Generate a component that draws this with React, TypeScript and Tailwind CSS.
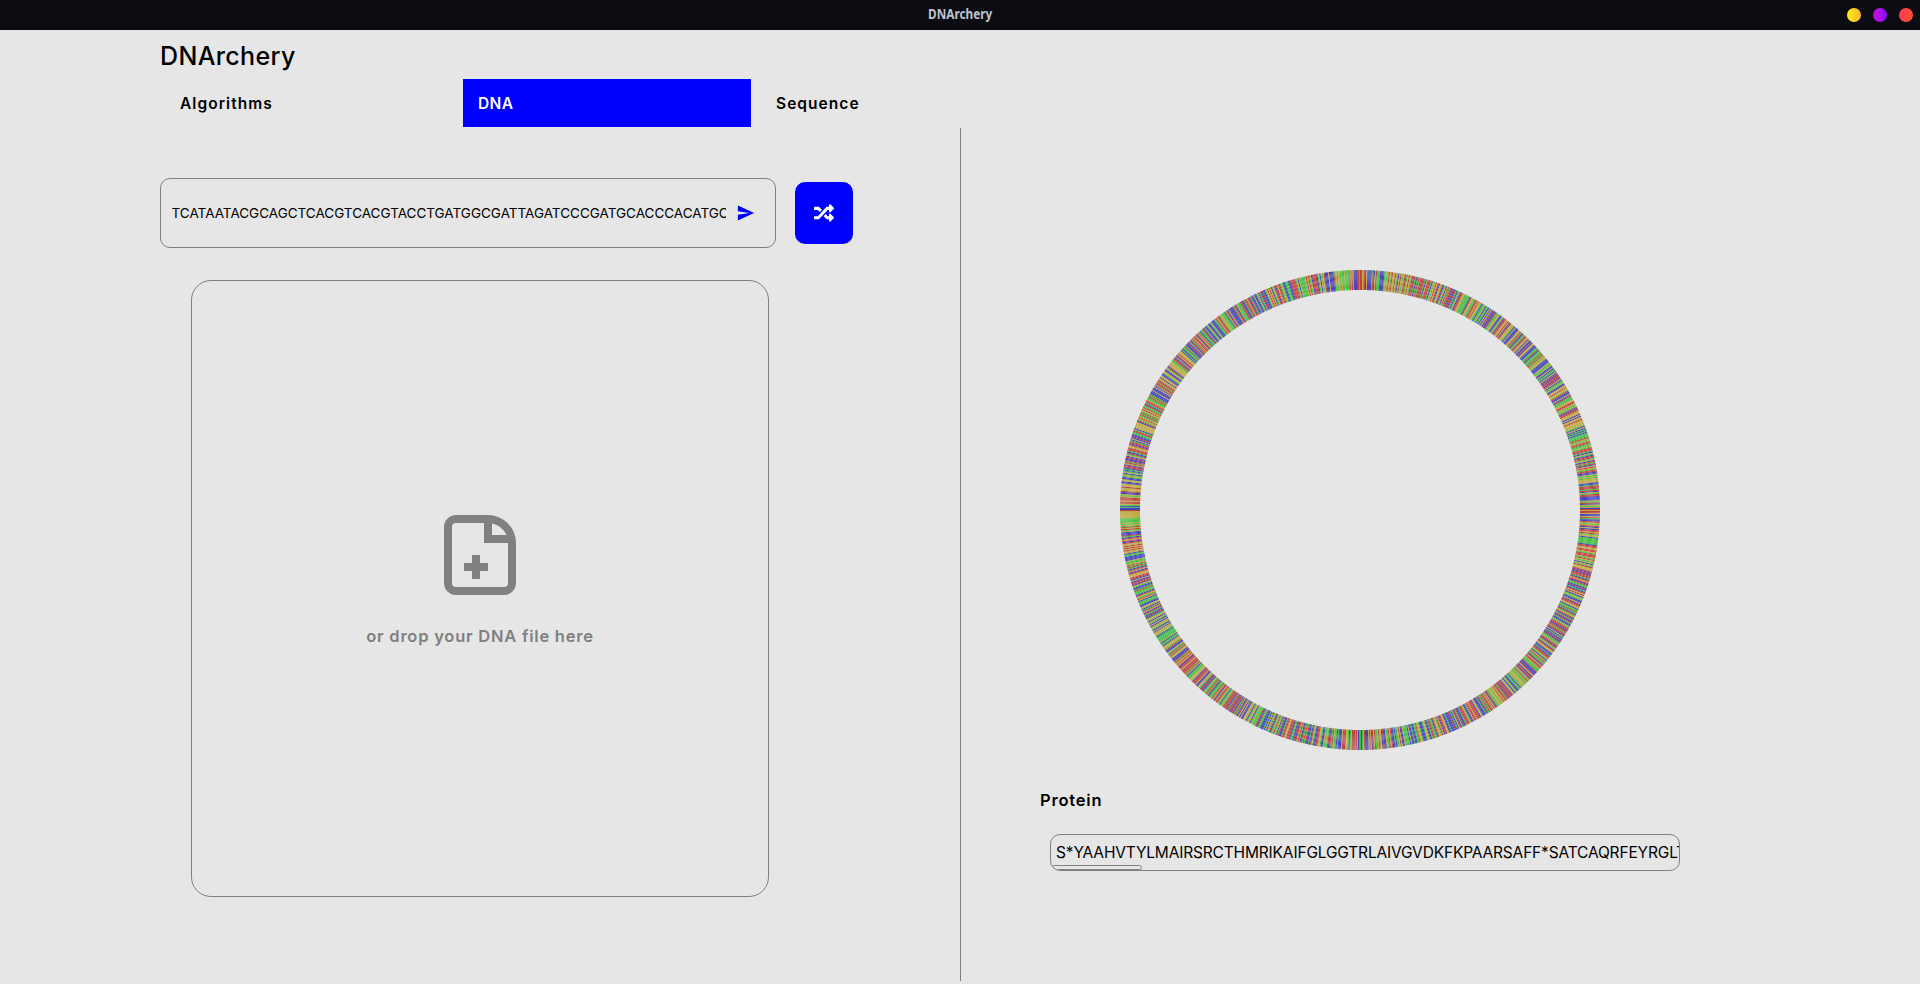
import React from 'react';
import { FaRandom } from 'react-icons/fa';
import { IoMdSend } from 'react-icons/io';

const DNA = 'TCATAATACGCAGCTCACGTCACGTACCTGATGGCGATTAGATCCCGATGCACCCACATGC';
const PROTEIN = 'S*YAAHVTYLMAIRSRCTHMRIKAIFGLGGTRLAIVGVDKFKPAARSAFF*SATCAQRFEYRGLT';

const COUNT = 1400;
const COLORS: Record<string, string> = { A: '#c04040', C: '#40c040', G: '#4040c0', T: '#c0a840' };

/* Stretches of the plasmid, by base index clockwise from the top. */
const RUNS: [number, string][] = [
  [0, 'AATCAGTGGGGCAGTACCCGGGGCTCTATCATTATCGTATCTAACTATC'],
  [1340, 'TGTCCCCCTATACTGAAAAGCTGTCTAGGGTGGGGACTCTTCTCCTCCCCATATGGGA'],
  [1021, 'TAGCAGGGTCATACTCTCCCCTTTTTTTAGGCGCTAATAAATCTGGATTTATTTGGTTGGCTCGTC'],
  [1088, 'CGAAGTACAGGAGTCAGCAAATTAGAACGTGAGGCCAACGTTTTTTGAC'],
  [986, 'TTTAGTAGCACATCCTGGGGCCGTTATATATTAGA'],
  [340, 'GTCAGTCTGATAATGGTACGGATC'],
];

function buildBases(): string[] {
  const out: string[] = [];
  let s = 90417;
  for (let i = 0; i < COUNT; i++) {
    s = (Math.imul(s, 1664525) + 1013904223) >>> 0;
    out.push('ACGT'[s >>> 30]);
  }
  RUNS.forEach(([start, run]) => run.split('').forEach((b, k) => { out[(start + k) % COUNT] = b; }));
  return out;
}

const BASES = buildBases();

function Plasmid() {
  const point = (r: number, i: number) => {
    const a = (i / COUNT) * Math.PI * 2;
    return `${(240 + r * Math.sin(a)).toFixed(3)} ${(240 - r * Math.cos(a)).toFixed(3)}`;
  };
  return (
    <svg width="480" height="480" viewBox="0 0 480 480" className="block">
      {BASES.map((b, i) => (
        <path key={i} fill={COLORS[b]} d={`M${point(240, i)}L${point(240, i + 1)}L${point(220, i + 1)}L${point(220, i)}Z`} />
      ))}
    </svg>
  );
}

function FileAddIcon() {
  return (
    <svg width="96" height="96" viewBox="0 0 24 24" fill="#808080" fillRule="evenodd" className="block">
      <path d="M6 2h8a7 7 0 0 1 7 7v10a3 3 0 0 1-3 3H6a3 3 0 0 1-3-3V5a3 3 0 0 1 3-3zM13 4H6a1 1 0 0 0-1 1v14a1 1 0 0 0 1 1h12a1 1 0 0 0 1-1V9h-6zM15 4.1V7h3.6A5 5 0 0 0 15 4.1z" />
      <path d="M10 12h2v2h2v2h-2v2h-2v-2H8v-2h2z" />
    </svg>
  );
}

function TitleBar() {
  return (
    <header className="grid h-[30px] grid-cols-[1fr_auto_1fr] items-center bg-[#0c0d12]">
      <span />
      <span className="-mt-0.5 w-[66px] text-center font-['Noto_Sans'] text-[14px] leading-5 font-bold text-[#bfc3d0]">
        <span className="-mx-2 inline-block scale-x-[0.84]">DNArchery</span>
      </span>
      <div className="flex justify-end gap-3 pr-[7px]">
        <i className="size-3.5 rounded-full bg-linear-to-r from-[#faf000] to-[#ffb030]" />
        <i className="size-3.5 rounded-full bg-linear-to-r from-[#c800e0] to-[#8c00ff]" />
        <i className="size-3.5 rounded-full bg-linear-to-r from-[#ff3850] to-[#ff5030]" />
      </div>
    </header>
  );
}

export default function App() {
  return (
    <div className="flex h-[984px] w-[1920px] flex-col overflow-hidden bg-[#e6e6e6] font-['Inter',sans-serif] text-black">
      <TitleBar />
      <h1 className="h-[49px] pt-[8px] pl-[160px] text-[25px] leading-9 font-medium tracking-[0.35px]">DNArchery</h1>
      <nav className="flex h-12 items-center pl-[160px] text-[15.5px] font-semibold">
        <a className="w-[303px] pt-px pl-5 tracking-[1.05px]">Algorithms</a>
        <a className="flex h-12 w-[288px] items-center bg-[#0000ff] pt-px pl-[15px] tracking-[0.4px] text-white">DNA</a>
        <a className="pt-px pl-[25px] tracking-[1.05px]">Sequence</a>
      </nav>
      <main className="flex flex-1">
        <section className="w-[960px] pt-[51px] pl-[160px]">
          <div className="flex items-center gap-[19px]">
            <div className="flex h-[70px] w-[616px] items-center rounded-[10px] border border-[#808080] pl-[10.5px]">
              <div className="w-[554px] overflow-hidden text-[13.5px] leading-5 whitespace-nowrap">{DNA}</div>
              <IoMdSend className="ml-[10px] text-[#0000ff]" size={20} />
            </div>
            <button className="flex h-[62px] w-[58px] items-center justify-center rounded-[10px] bg-[#0000ff] text-white">
              <FaRandom size={20} />
            </button>
          </div>
          <div className="mt-8 ml-[31px] flex h-[617px] w-[578px] flex-col items-center rounded-[20px] border border-[#808080] pt-[226px]">
            <FileAddIcon />
            <p className="mt-[21px] text-[16.5px] leading-6 font-semibold tracking-[0.77px] whitespace-nowrap text-[#808080]">or drop your DNA file here</p>
          </div>
        </section>
        <div className="mt-px h-[853px] w-px bg-[#808080]" />
        <section className="pt-[143px] pl-[79px]">
          <div className="pl-20">
            <Plasmid />
          </div>
          <h2 className="mt-[38px] text-[16.5px] leading-6 font-semibold tracking-[0.8px]">Protein</h2>
          <div className="mt-[22px] ml-[10px] h-[37px] w-[630px] overflow-hidden rounded-[10px] border border-[#808080]">
            <div className="h-[30px] overflow-hidden pt-[6px] pl-[5px] text-[15.5px] leading-6 tracking-[-0.165px] whitespace-nowrap">{PROTEIN}</div>
            <div className="ml-px h-[5px] w-[90px] rounded-[3px] border border-[#808080]" />
          </div>
        </section>
      </main>
    </div>
  );
}
